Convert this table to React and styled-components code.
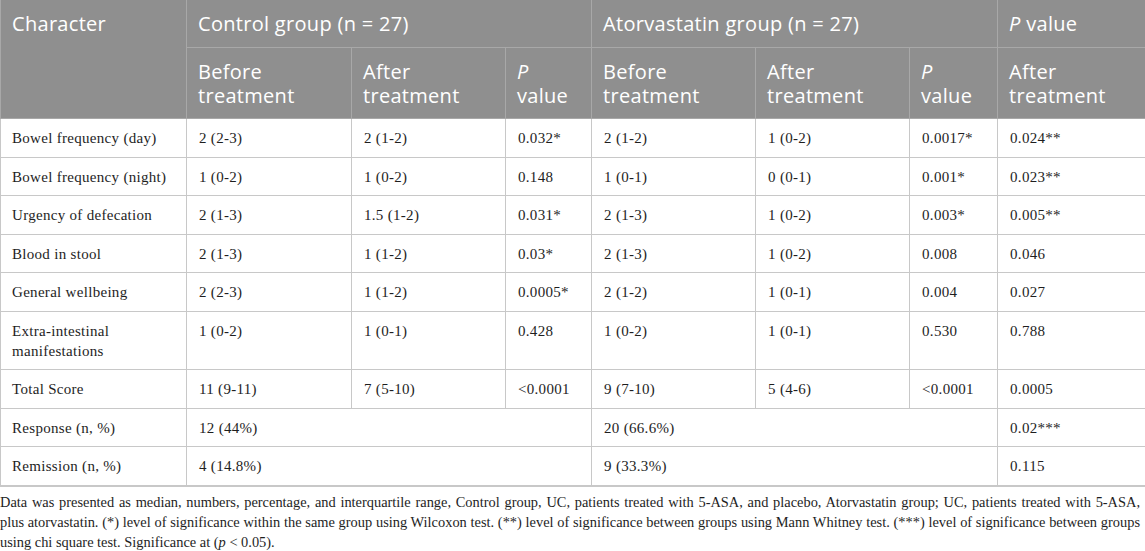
import styled, { createGlobalStyle } from 'styled-components'

const GlobalStyle = createGlobalStyle`
  html, body {
    margin: 0;
    padding: 0;
    background: #ffffff;
  }
`

const Wrap = styled.div`
  width: 1145px;
  padding: 0;
`

const Table = styled.table`
  width: 1144px;
  border-collapse: collapse;
  table-layout: fixed;
  border-left: 1px solid #c8c8c8;
  border-right: 1px solid #c8c8c8;
  border-bottom: 2px solid #c8c8c8;
`

const HeadCell = styled.th`
  background: #8f8f8f;
  color: #ffffff;
  font-family: "Open Sans", "Liberation Sans", sans-serif;
  font-weight: 400;
  font-size: 20px;
  letter-spacing: 0.3px;
  line-height: 24px;
  text-align: left;
  vertical-align: top;
  padding: 12px 11px 10.5px;
  border: 1px solid #a8a8a8;
  border-top: none;
`

const PLine = styled.i`
  display: block;
`

const Cell = styled.td`
  font-family: "Liberation Serif", "DejaVu Serif", serif;
  font-size: 15px;
  letter-spacing: 0.3px;
  line-height: 20px;
  color: #1e1e1e;
  text-align: left;
  vertical-align: top;
  padding: ${p => (p.$first ? '9px 11px 8.5px 11px' : '9px 11px 8.5px 12px')};
  border: 1px solid #c8c8c8;
`

const Caption = styled.div`
  margin-top: 5px;
  width: 1140px;
  font-family: "Liberation Serif", "DejaVu Serif", serif;
  font-size: 14.4px;
  line-height: 20px;
  color: #1e1e1e;
`

const CaptionLine = styled.div`
  text-align: justify;
  text-align-last: ${p => (p.$last ? 'left' : 'justify')};
  white-space: nowrap;
`

const columns = [186, 165, 154, 86, 164, 154, 88, 148]

const rows = [
  ['Bowel frequency (day)', '2 (2-3)', '2 (1-2)', '0.032*', '2 (1-2)', '1 (0-2)', '0.0017*', '0.024**'],
  ['Bowel frequency (night)', '1 (0-2)', '1 (0-2)', '0.148', '1 (0-1)', '0 (0-1)', '0.001*', '0.023**'],
  ['Urgency of defecation', '2 (1-3)', '1.5 (1-2)', '0.031*', '2 (1-3)', '1 (0-2)', '0.003*', '0.005**'],
  ['Blood in stool', '2 (1-3)', '1 (1-2)', '0.03*', '2 (1-3)', '1 (0-2)', '0.008', '0.046'],
  ['General wellbeing', '2 (2-3)', '1 (1-2)', '0.0005*', '2 (1-2)', '1 (0-1)', '0.004', '0.027'],
  ['Extra-intestinal manifestations', '1 (0-2)', '1 (0-1)', '0.428', '1 (0-2)', '1 (0-1)', '0.530', '0.788'],
  ['Total Score', '11 (9-11)', '7 (5-10)', '<0.0001', '9 (7-10)', '5 (4-6)', '<0.0001', '0.0005'],
]

const summaryRows = [
  ['Response (n, %)', '12 (44%)', '20 (66.6%)', '0.02***'],
  ['Remission (n, %)', '4 (14.8%)', '9 (33.3%)', '0.115'],
]

const App = () => {
  return (
    <Wrap>
      <GlobalStyle />
      <Table>
        <colgroup>
          {columns.map((w, i) => <col key={i} style={{ width: w }} />)}
        </colgroup>
        <thead>
          <tr>
            <HeadCell rowSpan={2}>Character</HeadCell>
            <HeadCell colSpan={3}>Control group (n = 27)</HeadCell>
            <HeadCell colSpan={3}>Atorvastatin group (n = 27)</HeadCell>
            <HeadCell><i>P</i> value</HeadCell>
          </tr>
          <tr>
            <HeadCell>Before treatment</HeadCell>
            <HeadCell>After treatment</HeadCell>
            <HeadCell><PLine>P</PLine>value</HeadCell>
            <HeadCell>Before treatment</HeadCell>
            <HeadCell>After treatment</HeadCell>
            <HeadCell><PLine>P</PLine>value</HeadCell>
            <HeadCell>After treatment</HeadCell>
          </tr>
        </thead>
        <tbody>
          {rows.map((row, i) => (
            <tr key={i}>
              {row.map((value, j) => <Cell key={j} $first={j === 0}>{value}</Cell>)}
            </tr>
          ))}
          {summaryRows.map((row, i) => (
            <tr key={i}>
              <Cell $first>{row[0]}</Cell>
              <Cell colSpan={3}>{row[1]}</Cell>
              <Cell colSpan={3}>{row[2]}</Cell>
              <Cell>{row[3]}</Cell>
            </tr>
          ))}
        </tbody>
      </Table>
      <Caption>
        <CaptionLine>Data was presented as median, numbers, percentage, and interquartile range, Control group, UC, patients treated with 5-ASA, and placebo, Atorvastatin group; UC, patients treated with 5-ASA,</CaptionLine>
        <CaptionLine>plus atorvastatin. (*) level of significance within the same group using Wilcoxon test. (**) level of significance between groups using Mann Whitney test. (***) level of significance between groups</CaptionLine>
        <CaptionLine $last>using chi square test. Significance at (<i>p</i> &lt; 0.05).</CaptionLine>
      </Caption>
    </Wrap>
  )
}

export default App
